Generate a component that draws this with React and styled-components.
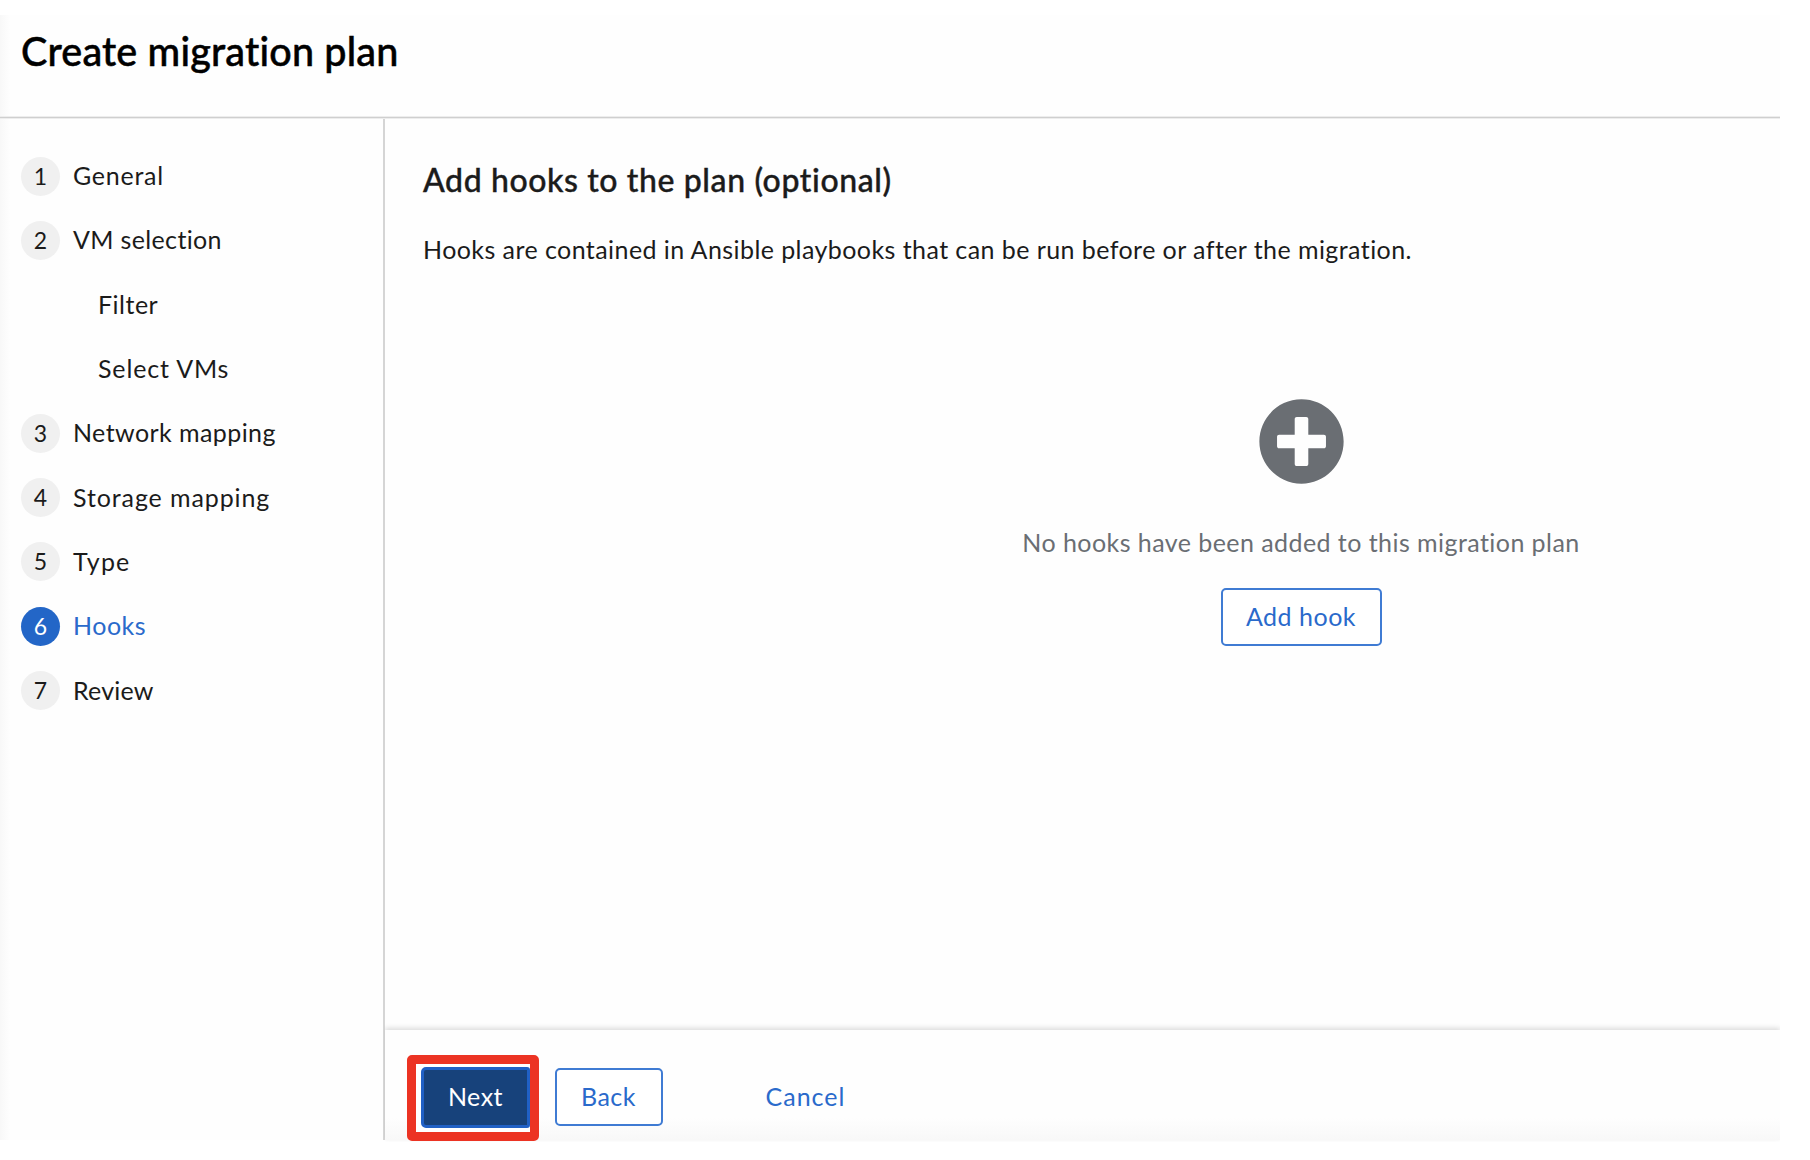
import React from "react";
import styled, { createGlobalStyle } from "styled-components";
import { FaPlusCircle } from "react-icons/fa";

const GlobalStyle = createGlobalStyle`
  *, *::before, *::after { box-sizing: border-box; }
  body {
    margin: 0;
    background: #fff;
    color: #1b1b1b;
    font-family: Lato, "Open Sans", sans-serif;
    font-size: 25px;
    overflow: hidden;
  }
  h1, h2, p, ol { margin: 0; padding: 0; font-weight: 400; }
  button { font: inherit; }
`;

const Page = styled.div`
  height: 1160px;
  padding: 15px 30px 20px 0;
`;

const Wizard = styled.div`
  display: flex;
  flex-direction: column;
  height: 1125px;
  background: linear-gradient(90deg, #f8f8f8 0, #fefefe 10px);
`;

const Header = styled.header`
  flex: none;
  height: 104px;
  padding: 14px 0 0 21px;
  background: linear-gradient(#ededed 1px, #cfcfcf 1px 2px, #ededed 2px) bottom / 100% 3px no-repeat;
`;

const Title = styled.h1`
  color: #000;
  font-size: 39.5px;
  font-weight: 500;
  line-height: 44px;
  letter-spacing: 0.17px;
  -webkit-text-stroke: 0.5px currentColor;
  white-space: nowrap;
`;

const Body = styled.div`
  flex: 1;
  display: flex;
  min-height: 0;
`;

const Sidebar = styled.nav`
  flex: none;
  width: 384.5px;
  padding: 25px 0 0 21px;
  border-right: 2px solid #d5d5d5;
`;

const Steps = styled.ol`
  list-style: none;
`;

const Step = styled.li`
  display: flex;
  align-items: center;
  gap: 13px;
  height: 64.3px;
  padding-left: ${(p) => (p.$nested ? "77px" : "0")};
  color: ${(p) => (p.$current ? "#2a6acb" : "#1b1b1b")};
  line-height: 32px;
  letter-spacing: ${(p) => p.$spacing ?? 0.5}px;
  white-space: nowrap;
`;

const StepLabel = styled.span`
  padding-bottom: 2px;
`;

const Badge = styled.span`
  display: flex;
  align-items: center;
  justify-content: center;
  flex: none;
  width: 39px;
  height: 39px;
  padding-bottom: 1px;
  border-radius: 50%;
  background: ${(p) => (p.$current ? "#2366c7" : "#f0f0f0")};
  color: ${(p) => (p.$current ? "#fff" : "#1b1b1b")};
  font-size: 23px;
  letter-spacing: 0;
`;

const Main = styled.main`
  flex: 1;
  min-width: 0;
  display: flex;
  flex-direction: column;
`;

const Content = styled.section`
  flex: 1;
  overflow: hidden;
  padding: 41px 0 0 38.5px;
`;

const Heading = styled.h2`
  font-size: 32px;
  font-weight: 500;
  line-height: 40px;
  letter-spacing: 0.6px;
  -webkit-text-stroke: 0.4px currentColor;
  white-space: nowrap;
`;

const Description = styled.p`
  margin-top: 32px;
  line-height: 34px;
  letter-spacing: 0.43px;
  white-space: nowrap;
`;

const EmptyState = styled.div`
  display: flex;
  flex-direction: column;
  align-items: center;
  width: 1756px;
  margin-top: 132px;
  color: #6a6e73;
`;

const EmptyIcon = styled(FaPlusCircle)`
  width: 87px;
  height: 87px;
  display: block;
`;

const EmptyText = styled.p`
  margin: 40px 0 28.5px;
  line-height: 34px;
  letter-spacing: 0.44px;
  white-space: nowrap;
`;

const Button = styled.button`
  display: flex;
  align-items: center;
  justify-content: center;
  flex: none;
  width: ${(p) => p.$width}px;
  height: 58px;
  padding: 0 0 2px;
  border: 2px solid #3f7bd3;
  border-radius: 5px;
  background: #fff;
  color: #2a6acb;
  line-height: 34px;
  letter-spacing: ${(p) => p.$spacing ?? 0.5}px;
`;

const PrimaryButton = styled(Button)`
  height: 61px;
  border: 3px solid #2060c5;
  border-radius: 5px 3px 3px 5px;
  background: #17427b;
  color: #fff;
`;

const LinkButton = styled(Button)`
  border-color: transparent;
  background: transparent;
`;

const Footer = styled.footer`
  flex: none;
  display: flex;
  align-items: flex-start;
  height: 110px;
  padding: 24.5px 0 0 22.5px;
  background: linear-gradient(#fefefe 80%, #f8f8f8);
  box-shadow: 0 -2px 5px rgba(0, 0, 0, 0.14);
  clip-path: inset(-8px 0 -2px 0);
`;

const Highlight = styled.div`
  flex: none;
  width: 131.5px;
  height: 86px;
  padding: 3px 0 0 5px;
  border: 9px solid #ec3323;
  border-radius: 5px;
  background: #fff;
`;

const SecondaryActions = styled.div`
  display: flex;
  gap: 77px;
  padding: 13.5px 0 0 16px;
`;

const steps = [
  { number: 1, label: "General", spacing: 0.75 },
  { number: 2, label: "VM selection", spacing: 0.35 },
  { label: "Filter" },
  { label: "Select VMs", spacing: 0.85 },
  { number: 3, label: "Network mapping", spacing: 0.42 },
  { number: 4, label: "Storage mapping", spacing: 0.9 },
  { number: 5, label: "Type", spacing: 1.2 },
  { number: 6, label: "Hooks", current: true },
  { number: 7, label: "Review", spacing: 0.2 },
];

export default function App() {
  return (
    <Page>
      <GlobalStyle />
      <Wizard>
        <Header>
          <Title>Create migration plan</Title>
        </Header>
        <Body>
          <Sidebar>
            <Steps>
              {steps.map((s) => (
                <Step key={s.label} $nested={!s.number} $current={s.current} $spacing={s.spacing}>
                  {s.number && <Badge $current={s.current}>{s.number}</Badge>}
                  <StepLabel>{s.label}</StepLabel>
                </Step>
              ))}
            </Steps>
          </Sidebar>
          <Main>
            <Content>
              <Heading>Add hooks to the plan (optional)</Heading>
              <Description>
                Hooks are contained in Ansible playbooks that can be run before or after the migration.
              </Description>
              <EmptyState>
                <EmptyIcon />
                <EmptyText>No hooks have been added to this migration plan</EmptyText>
                <Button $width={161}>Add hook</Button>
              </EmptyState>
            </Content>
            <Footer>
              <Highlight>
                <PrimaryButton $width={109}>Next</PrimaryButton>
              </Highlight>
              <SecondaryActions>
                <Button $width={108}>Back</Button>
                <LinkButton $width={132} $spacing={1}>Cancel</LinkButton>
              </SecondaryActions>
            </Footer>
          </Main>
        </Body>
      </Wizard>
    </Page>
  );
}
